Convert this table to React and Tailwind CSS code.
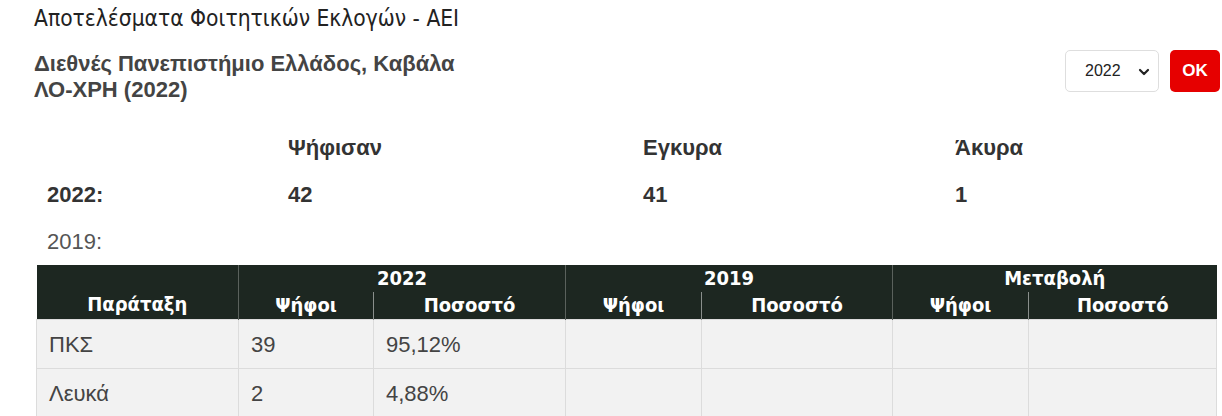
import React from "react";

const rows = [
  { name: "ΠΚΣ", votes: "39", pct: "95,12%" },
  { name: "Λευκά", votes: "2", pct: "4,88%" },
];

const cell = "border border-[#dcdcdc] px-[12px] h-[49px] text-[22px] text-[#444] font-normal";
const head = "font-bold text-white text-[20px] leading-[27px] text-center";

export default function App() {
  return (
    <div className="w-[1222px] h-[416px] overflow-hidden bg-white" style={{ fontFamily: '"Liberation Sans", Arial, sans-serif' }}>
      {/* Title */}
      <h1
        className="pl-[34px] pt-[3px] text-[22.6px] leading-[30px] text-[#222]"
        style={{ fontFamily: '"DejaVu Sans Condensed", "DejaVu Sans", sans-serif', fontStretch: "condensed" }}
      >
        Αποτελέσματα Φοιτητικών Εκλογών - ΑΕΙ
      </h1>

      {/* Subtitle + controls */}
      <div className="flex items-start justify-between pl-[34px] pr-[2px] mt-[18px]">
        <div className="text-[22px] leading-[26px] font-bold text-[#444]">
          <div>Διεθνές Πανεπιστήμιο Ελλάδος, Καβάλα</div>
          <div>ΛΟ-ΧΡΗ (2022)</div>
        </div>
        <div className="flex items-center gap-[11px] -mt-[1px]">
          <div className="relative w-[94px] h-[42px] rounded-[5px] border border-[#dedede] flex items-center pl-[19px] text-[16px] text-[#222]">
            2022
            <svg className="absolute right-[8px] top-[16px]" width="12" height="10" viewBox="0 0 12 10">
              <path d="M2 3l4 4 4-4" fill="none" stroke="#222" strokeWidth="2.2" strokeLinecap="round" strokeLinejoin="round" />
            </svg>
          </div>
          <button className="w-[50px] h-[42px] rounded-[5px] bg-[#e60000] text-white font-bold text-[17px]">
            OK
          </button>
        </div>
      </div>

      {/* Stats */}
      <div className="grid grid-cols-[241px_355px_312px_1fr] pl-[47px] mt-[21px] text-[22px] text-[#333]">
        <div className="h-[47px] flex items-center" />
        <div className="h-[47px] flex items-center font-bold">Ψήφισαν</div>
        <div className="h-[47px] flex items-center font-bold">Εγκυρα</div>
        <div className="h-[47px] flex items-center font-bold">Άκυρα</div>
        <div className="h-[47px] flex items-center font-bold">2022:</div>
        <div className="h-[47px] flex items-center font-bold">42</div>
        <div className="h-[47px] flex items-center font-bold">41</div>
        <div className="h-[47px] flex items-center font-bold">1</div>
        <div className="h-[47px] flex items-center text-[#555]">2019:</div>
      </div>

      {/* Table */}
      <div className="pl-[36px] pr-[5px]">
        <table className="w-full border-collapse table-fixed">
          <colgroup>
            <col className="w-[202px]" />
            <col className="w-[135px]" />
            <col className="w-[192px]" />
            <col className="w-[136px]" />
            <col className="w-[191px]" />
            <col className="w-[136px]" />
            <col />
          </colgroup>
          <thead className="bg-[#1d2721]" style={{ fontFamily: '"Liberation Sans Narrow", "Arial Narrow", "DejaVu Sans Condensed", sans-serif' }}>
            <tr>
              <th rowSpan={2} className={`${head} align-bottom pb-[1px] border-r border-[#5a615c]`}>Παράταξη</th>
              <th colSpan={2} className={`${head} border-r border-[#5a615c]`}>2022</th>
              <th colSpan={2} className={`${head} border-r border-[#5a615c]`}>2019</th>
              <th colSpan={2} className={head}>Μεταβολή</th>
            </tr>
            <tr>
              <th className={`${head} border-r border-[#8a8f8c]`}>Ψήφοι</th>
              <th className={`${head} border-r border-[#5a615c]`}>Ποσοστό</th>
              <th className={`${head} border-r border-[#8a8f8c]`}>Ψήφοι</th>
              <th className={`${head} border-r border-[#5a615c]`}>Ποσοστό</th>
              <th className={`${head} border-r border-[#8a8f8c]`}>Ψήφοι</th>
              <th className={head}>Ποσοστό</th>
            </tr>
          </thead>
          <tbody className="bg-[#f2f2f2]">
            {rows.map((r) => (
              <tr key={r.name}>
                <td className={cell}>{r.name}</td>
                <td className={cell}>{r.votes}</td>
                <td className={cell}>{r.pct}</td>
                <td className={cell} />
                <td className={cell} />
                <td className={cell} />
                <td className={cell} />
              </tr>
            ))}
          </tbody>
        </table>
      </div>
    </div>
  );
}
